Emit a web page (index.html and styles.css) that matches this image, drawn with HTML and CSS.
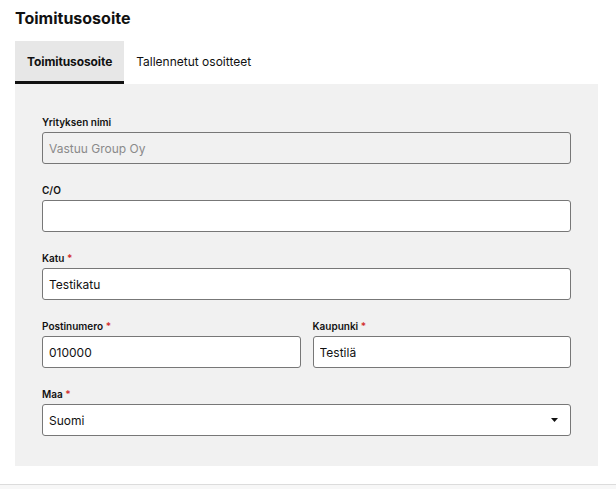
FILE: index.html
```html
<!DOCTYPE html>
<html lang="fi">
<head>
    <meta charset="UTF-8">
    <meta name="viewport" content="width=device-width, initial-scale=1.0">
    <title>Toimitusosoite</title>
    <link rel="stylesheet" href="styles.css">
</head>

<body>
    <div class="page">
        <h2 class="title">Toimitusosoite</h2>

        <div class="tabs">
            <button class="tab active">Toimitusosoite</button>
            <button class="tab">Tallennetut osoitteet</button>
        </div>

        <form class="panel">
            <div class="field">
                <label for="company">Yrityksen nimi</label>
                <input type="text" id="company" value="Vastuu Group Oy" disabled>
            </div>
            <div class="field">
                <label for="co">C/O</label>
                <input type="text" id="co">
            </div>
            <div class="field">
                <label for="street">Katu <span class="req">*</span></label>
                <input type="text" id="street" value="Testikatu">
            </div>
            <div class="row">
                <div class="field">
                    <label for="zip">Postinumero <span class="req">*</span></label>
                    <input type="text" id="zip" value="010000">
                </div>
                <div class="field">
                    <label for="city">Kaupunki <span class="req">*</span></label>
                    <input type="text" id="city" value="Testilä">
                </div>
            </div>
            <div class="field">
                <label for="country">Maa <span class="req">*</span></label>
                <div class="select">
                    <select id="country">
                        <option>Suomi</option>
                        <option>Ruotsi</option>
                        <option>Norja</option>
                    </select>
                    <svg class="caret" width="7" height="4" viewBox="0 0 7 4"><path d="M0 0h7L3.5 4z" fill="#111"/></svg>
                </div>
            </div>
        </form>
    </div>
    <div class="footer"></div>
</body>
</html>
```

FILE: styles.css
```css
body {
    margin: 0;
    font-family: Inter, "Noto Sans", sans-serif;
    color: #111;
    background: #fff;
}

.page {
    padding: 8px 18px 0 15px;
}

.title {
    margin: 0 0 12px;
    font-size: 16px;
    line-height: 21px;
    font-weight: 700;
}

.tabs {
    display: flex;
}

.tab {
    height: 43px;
    padding: 0 12px;
    border: none;
    border-bottom: 3px solid transparent;
    background: none;
    font-family: inherit;
    font-size: 12px;
    color: #111;
    cursor: pointer;
}

.tab.active {
    background: #e7e7e7;
    border-bottom-color: #111;
    font-weight: 700;
    letter-spacing: -0.1px;
}

.panel {
    display: flex;
    flex-direction: column;
    gap: 19px;
    padding: 31px 27px 30px;
    background: #f1f1f1;
}

.field {
    display: flex;
    flex-direction: column;
    gap: 3px;
}

.field label {
    font-size: 10px;
    line-height: 14px;
    font-weight: 600;
}

.req {
    color: #d32f2f;
}

.row {
    display: grid;
    grid-template-columns: 1fr 1fr;
    gap: 12px;
}

.field input,
.select select {
    box-sizing: border-box;
    width: 100%;
    height: 32px;
    padding: 0 6px;
    border: 1px solid #777;
    border-radius: 3px;
    background: #fff;
    font-family: inherit;
    font-size: 12px;
    color: #111;
}

.field input:disabled {
    background: #f1f1f1;
    color: #8a8a8a;
}

.select {
    position: relative;
}

.select select {
    appearance: none;
}

.caret {
    position: absolute;
    right: 13px;
    top: 14px;
    pointer-events: none;
}

.footer {
    margin-top: 18px;
    height: 10px;
    border-top: 1px solid #dcdcdc;
    background: #f7f7f7;
}
```
